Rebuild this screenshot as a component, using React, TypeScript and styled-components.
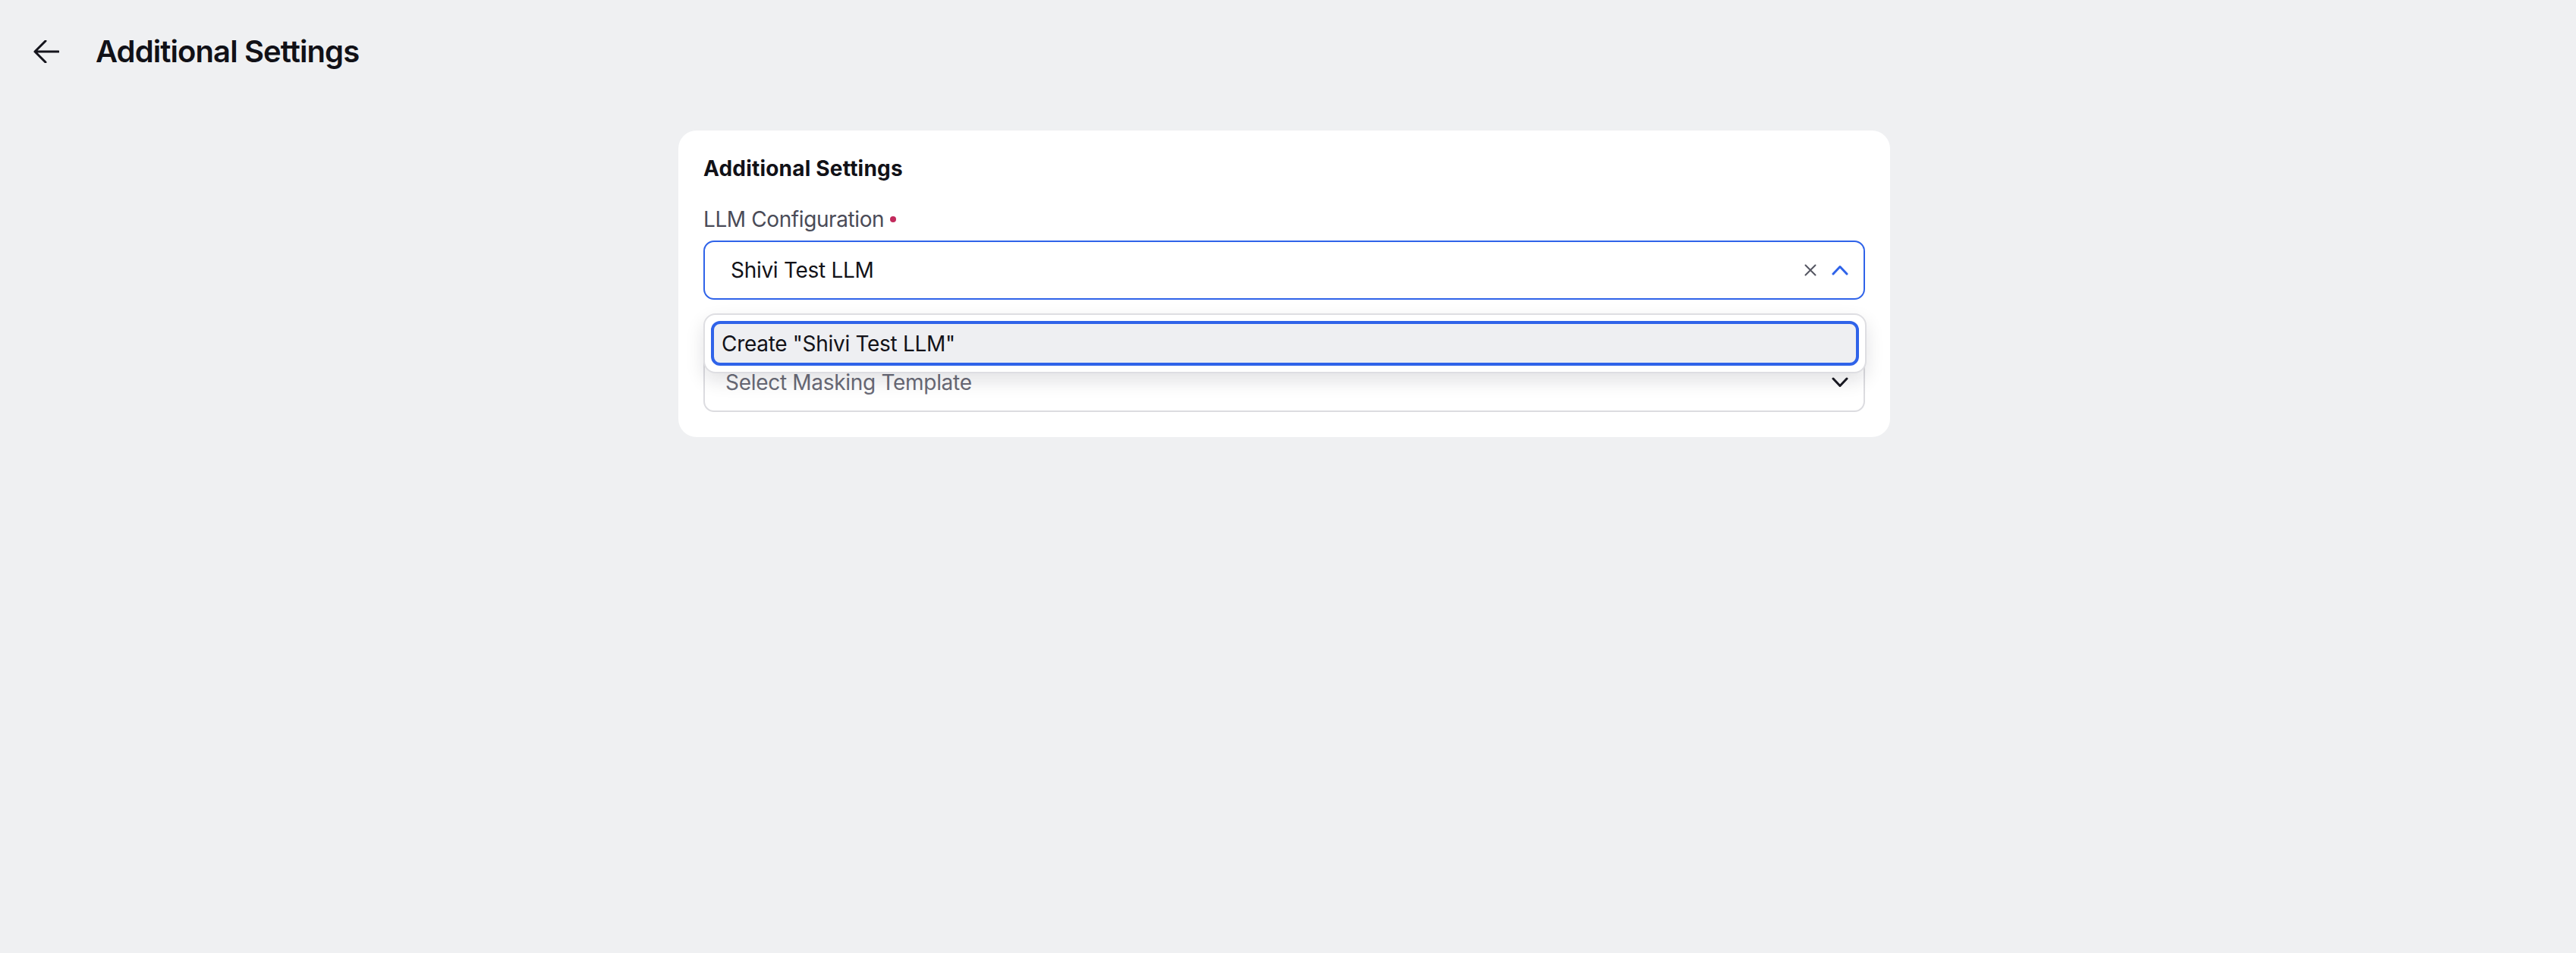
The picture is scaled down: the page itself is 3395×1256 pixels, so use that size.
import { createGlobalStyle, styled } from "styled-components";

const GlobalStyle = createGlobalStyle`
  html, body {
    margin: 0;
    padding: 0;
    background: #eff0f2;
    font-family: Inter, "Noto Sans", "Liberation Sans", sans-serif;
    color: #121218;
  }
  * { box-sizing: border-box; }
`;

const Page = styled.div`
  min-height: 1256px;
  background: #eff0f2;
`;

const Header = styled.header`
  display: flex;
  align-items: center;
  gap: 48px;
  height: 48px;
  margin-top: 44px;
  padding-left: 44px;
`;

const BackButton = styled.button`
  display: flex;
  align-items: center;
  justify-content: center;
  width: 34px;
  height: 34px;
  padding: 0;
  border: none;
  background: transparent;
  cursor: pointer;
  color: #14141c;
`;

const PageTitle = styled.h1`
  margin: 0;
  font-size: 40px;
  line-height: 48px;
  font-weight: 600;
  letter-spacing: -0.9px;
  color: #111117;
`;

const Main = styled.main`
  display: flex;
  justify-content: center;
  padding: 80px 10px 0 0;
`;

const Card = styled.section`
  width: 1597px;
  display: flex;
  flex-direction: column;
  padding: 32px 33px 33px 33px;
  background: #ffffff;
  border-radius: 24px;
`;

const CardTitle = styled.h2`
  margin: 0 0 31px;
  font-size: 28px;
  line-height: 36px;
  font-weight: 700;
  letter-spacing: 0.2px;
  color: #111117;
`;

const Fields = styled.div`
  display: flex;
  flex-direction: column;
  gap: 24px;
`;

const Field = styled.div`
  display: flex;
  flex-direction: column;
  gap: 10px;
`;

const Label = styled.label`
  display: flex;
  align-items: center;
  gap: 8px;
  font-size: 28px;
  line-height: 36px;
  letter-spacing: -0.4px;
  color: #4a4b57;
`;

const RequiredDot = styled.span`
  width: 8px;
  height: 8px;
  border-radius: 50%;
  background: #c22a5c;
`;

const SelectWrap = styled.div`
  position: relative;
`;

const SelectBox = styled.div<{ $focused?: boolean; $padLeft: number }>`
  display: flex;
  align-items: center;
  height: 78px;
  padding: 0 20px 0 ${(p) => p.$padLeft}px;
  border: 2px solid ${(p) => (p.$focused ? "#2f63e9" : "#dcdce0")};
  border-radius: 14px;
  background: #fff;
`;

const Value = styled.span<{ $placeholder?: boolean }>`
  flex: 1;
  font-size: 28px;
  line-height: 36px;
  letter-spacing: -0.3px;
  color: ${(p) => (p.$placeholder ? "#6a6b77" : "#121218")};
`;

const Icons = styled.div`
  display: flex;
  align-items: center;
  gap: 20px;
`;

const IconSlot = styled.span`
  display: flex;
  align-items: center;
  justify-content: center;
`;

const Menu = styled.div`
  position: absolute;
  top: calc(100% + 18px);
  left: 0;
  right: -2px;
  padding: 8px;
  background: #fff;
  border: 2px solid #dedee2;
  border-radius: 16px;
  box-shadow: 0 10px 24px rgba(20, 20, 30, 0.12);
  z-index: 10;
`;

const Option = styled.div<{ $active?: boolean }>`
  display: flex;
  align-items: center;
  height: 59px;
  padding: 0 10px;
  border: 4px solid ${(p) => (p.$active ? "#2f63e9" : "transparent")};
  border-radius: 12px;
  background: ${(p) => (p.$active ? "#eeeff2" : "transparent")};
  font-size: 28px;
  line-height: 36px;
  letter-spacing: -0.3px;
  color: #121218;
`;

function ArrowBack() {
  return (
    <svg width="34" height="30" viewBox="0 0 34 30" fill="none">
      <path d="M33 15H2M16 1L2 15L16 29" stroke="currentColor" strokeWidth="3" strokeLinecap="round" strokeLinejoin="round" />
    </svg>
  );
}

function ClearIcon() {
  return (
    <svg width="16" height="16" viewBox="0 0 16 16" fill="none">
      <path d="M1.5 1.5L14.5 14.5M14.5 1.5L1.5 14.5" stroke="#555662" strokeWidth="2" strokeLinecap="round" />
    </svg>
  );
}

function Chevron({ up, color }: { up?: boolean; color: string }) {
  return (
    <svg width="22" height="14" viewBox="0 0 22 14" fill="none">
      <path
        d={up ? "M2 12L11 2.5L20 12" : "M2 2L11 11.5L20 2"}
        stroke={color}
        strokeWidth="3"
        strokeLinecap="round"
        strokeLinejoin="round"
      />
    </svg>
  );
}

export default function App() {
  return (
    <Page>
      <GlobalStyle />
      <Header>
        <BackButton aria-label="Back">
          <ArrowBack />
        </BackButton>
        <PageTitle>Additional Settings</PageTitle>
      </Header>

      <Main>
        <Card>
          <CardTitle>Additional Settings</CardTitle>
          <Fields>
            <Field>
              <Label>
                LLM Configuration <RequiredDot />
              </Label>
              <SelectWrap>
                <SelectBox $focused $padLeft={34}>
                  <Value>Shivi Test LLM</Value>
                  <Icons>
                    <IconSlot>
                      <ClearIcon />
                    </IconSlot>
                    <IconSlot>
                      <Chevron up color="#2f63e9" />
                    </IconSlot>
                  </Icons>
                </SelectBox>
                <Menu>
                  <Option $active>Create "Shivi Test LLM"</Option>
                </Menu>
              </SelectWrap>
            </Field>

            <Field>
              <Label>Masking Template</Label>
              <SelectWrap>
                <SelectBox $padLeft={27}>
                  <Value $placeholder>Select Masking Template</Value>
                  <Icons>
                    <IconSlot>
                      <Chevron color="#1a1a22" />
                    </IconSlot>
                  </Icons>
                </SelectBox>
              </SelectWrap>
            </Field>
          </Fields>
        </Card>
      </Main>
    </Page>
  );
}
